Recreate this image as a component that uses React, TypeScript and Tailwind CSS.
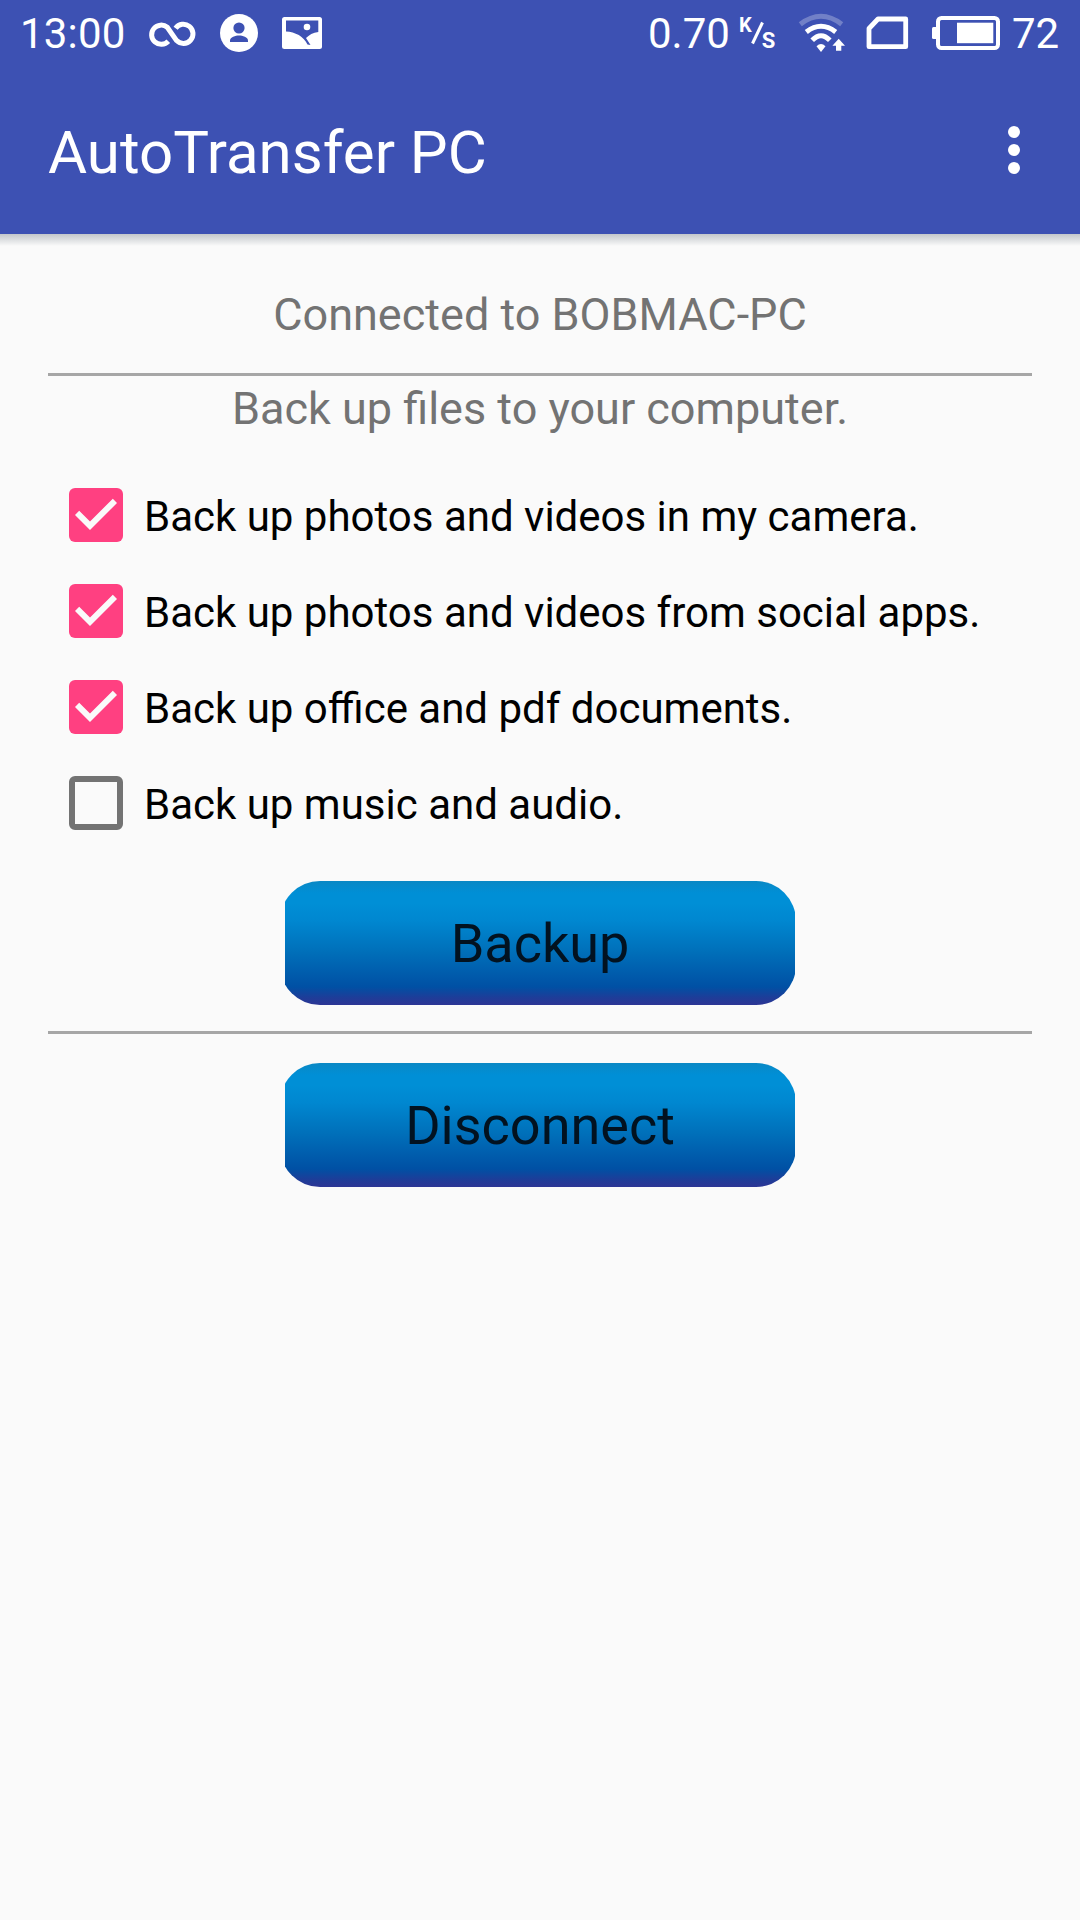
import { useState } from 'react';

const initialOptions = [
  { id: 'camera', label: 'Back up photos and videos in my camera.', checked: true },
  { id: 'social', label: 'Back up photos and videos from social apps.', checked: true },
  { id: 'documents', label: 'Back up office and pdf documents.', checked: true },
  { id: 'music', label: 'Back up music and audio.', checked: false },
];

function NotificationIcons() {
  return (
    <svg className="h-16 w-[180px]" viewBox="145 0 180 64" fill="none">
      <path
        d="M168.3 41.2A9.6 9.6 0 1 1 167.3 27.3L176.6 40.6A9.6 9.6 0 1 0 175.6 28.2"
        stroke="white"
        strokeWidth="5"
      />
      <circle cx="239" cy="33" r="19" fill="white" />
      <circle cx="239" cy="28" r="5.6" fill="#3d51b3" />
      <path d="M230 42v-1.6c0-3 5.5-4.8 9-4.8s9 1.8 9 4.8V42z" fill="#3d51b3" />
      <rect x="282" y="17" width="40" height="32" rx="2.5" fill="white" />
      <path d="M286 20.5H318.3V32C313 32.6 309 35 306 38L310.5 45L307.5 44.5C304 36.5 295 31.8 286 31.5Z" fill="#3d51b3" />
      <circle cx="307" cy="27" r="3.3" fill="white" />
    </svg>
  );
}

function SystemIcons() {
  return (
    <svg className="h-16 w-[210px]" viewBox="795 0 210 64" fill="none">
      <path d="M800.3 24.2Q821 8.3 841.7 24.2" stroke="white" strokeOpacity=".27" strokeWidth="5" />
      <path d="M806.3 32Q821 20.6 835.7 32" stroke="white" strokeWidth="5" />
      <path d="M812.2 40.3Q821 31.2 829.8 40.3" stroke="white" strokeWidth="5" />
      <path d="M816.5 46.3Q821 41.8 825.5 46.3L821 52Z" fill="white" />
      <path d="M838.7 38.8L845 45.8H841.3V50.8H836V45.8H832.4Z" fill="white" />
      <path d="M878 19H905.7V46.7H869V28.5Z" stroke="white" strokeWidth="4.8" strokeLinejoin="round" />
      <rect x="932" y="27" width="6" height="12" rx="1.5" fill="white" />
      <rect x="938" y="18" width="60" height="30" rx="3.5" stroke="white" strokeWidth="4" />
      <rect x="957" y="22.7" width="36.3" height="20.5" fill="white" />
    </svg>
  );
}

function StatusBar() {
  return (
    <div className="flex h-16 pl-5 text-[42px] leading-[67px] text-white">
      <span className="w-[125px] tracking-[0.2px]">13:00</span>
      <NotificationIcons />
      <span className="ml-[323px] w-[91px]">0.70</span>
      <div className="flex w-14 text-[20px] leading-6 font-bold">
        <span className="pt-[13px]">K</span>
        <svg className="-mx-px h-16 w-[13px]" viewBox="0 0 13 64">
          <path d="M1.5 43.5L11.5 22.5" stroke="white" strokeWidth="3" />
        </svg>
        <span className="-ml-px pt-[29px] text-[22px]">S</span>
      </div>
      <SystemIcons />
      <span className="ml-[7px]">72</span>
    </div>
  );
}

function Checkbox({ checked }: { checked: boolean }) {
  if (!checked) {
    return <span className="size-[54px] rounded-[6px] border-6 border-[#737373]" />;
  }
  return (
    <span className="size-[54px] rounded-[6px] bg-[#ff4081]">
      <svg viewBox="0 0 54 54" fill="#fafafa">
        <path d="M21 42L6 27L10.2 22.8L21 33.5L43.8 10.7L48 15Z" />
      </svg>
    </span>
  );
}

function ActionButton({ label }: { label: string }) {
  return (
    <button className="mx-auto flex h-[124px] w-[510px] justify-center overflow-hidden">
      <span className="-ml-1 h-[124px] w-[516px] shrink-0 rounded-[40px] bg-[linear-gradient(#0a88c4_0px,#008fd6_12px,#008fd6_22px,#0087d0_40px,#0070ba_70px,#0050a4_106px,#1f3c98_117px,#2c3594_124px)] pl-1 text-[54px] leading-[125px] text-[#021220]">
        {label}
      </span>
    </button>
  );
}

export default function App() {
  const [options, setOptions] = useState(initialOptions);

  const toggle = (id: string) =>
    setOptions(options.map((o) => (o.id === id ? { ...o, checked: !o.checked } : o)));

  return (
    <div className="h-[1920px] w-[1080px] overflow-hidden bg-[#fafafa] font-['Roboto',sans-serif] whitespace-nowrap">
      <header className="h-[234px] bg-[#3d51b3]">
        <StatusBar />
        <div className="flex h-[170px] justify-between pr-[60px] pl-12 text-white">
          <h1 className="text-[60px] leading-[178px]">AutoTransfer PC</h1>
          <div className="flex flex-col gap-1.5 pt-[62px]">
            <span className="size-3 rounded-full bg-white" />
            <span className="size-3 rounded-full bg-white" />
            <span className="size-3 rounded-full bg-white" />
          </div>
        </div>
      </header>
      <div className="h-3 bg-linear-to-b from-[#c3c7cb] to-[#fafafa]" />

      <main className="px-12">
        <p className="h-[127px] text-center text-[45px] leading-[138px] text-[#737373]">Connected to BOBMAC-PC</p>
        <hr className="h-[3px] border-0 bg-[#a6a6a6]" />
        <p className="h-[91px] text-center text-[45px] leading-[66px] text-[#737373]">Back up files to your computer.</p>

        <div className="pl-[21px]">
          {options.map(({ id, label, checked }) => (
            <div key={id} className="flex h-24 items-center gap-[21px]" onClick={() => toggle(id)}>
              <Checkbox checked={checked} />
              <span className="pt-1 text-[42px] leading-[98px] text-black">{label}</span>
            </div>
          ))}
        </div>

        <div className="pt-[30px] pb-[26px]">
          <ActionButton label="Backup" />
        </div>
        <hr className="h-[3px] border-0 bg-[#a6a6a6]" />
        <div className="pt-[29px]">
          <ActionButton label="Disconnect" />
        </div>
      </main>
    </div>
  );
}
